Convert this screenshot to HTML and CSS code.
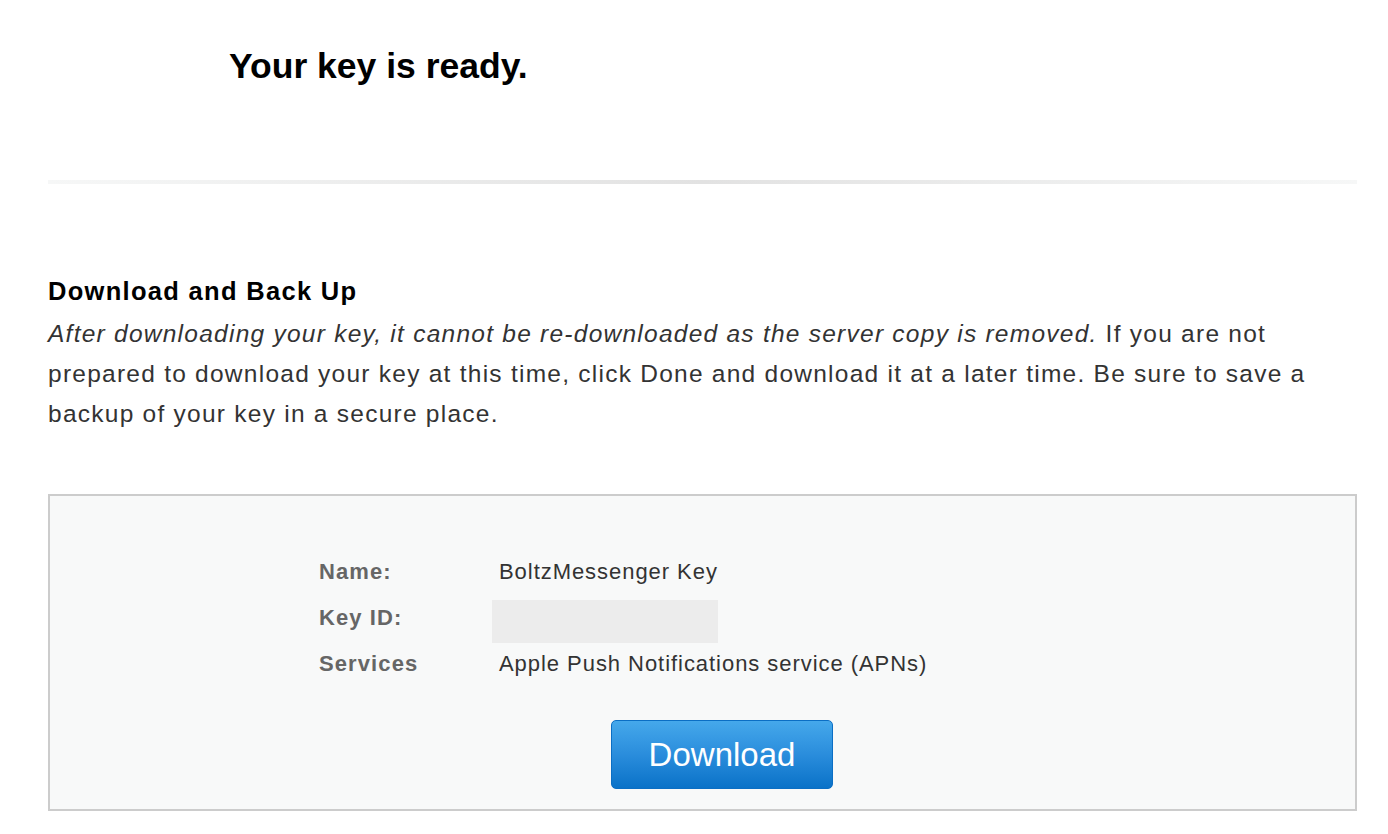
FILE: index.html
```html
<!DOCTYPE html>
<html>
<head>
<meta charset="utf-8">
<link rel="stylesheet" href="styles.css">
</head>
<body>
<div class="page">
  <h1 class="title">Your key is ready.</h1>
  <div class="rule"></div>
  <section class="backup">
    <h2 class="backup-heading">Download and Back Up</h2>
    <p class="backup-text"><em>After downloading your key, it cannot be re-downloaded as the server copy is removed.</em> If you are not prepared to download your key at this time, click Done and download it at a later time. Be sure to save a backup of your key in a secure place.</p>
  </section>
  <div class="keybox">
    <div class="keytable">
      <div class="label">Name:</div>
      <div class="value">BoltzMessenger Key</div>
      <div class="label">Key ID:</div>
      <div class="value value-redacted"><span class="redacted"></span></div>
      <div class="label">Services</div>
      <div class="value">Apple Push Notifications service (APNs)</div>
    </div>
    <div class="actions">
      <button class="btn-download">Download</button>
    </div>
  </div>
</div>
</body>
</html>
```
FILE: styles.css
```css
html, body {
  margin: 0;
  padding: 0;
  background: #fff;
}
body {
  font-family: "Liberation Sans", Arial, sans-serif;
  color: #333;
}
.page {
  padding: 0 31px 0 48px;
}
.title {
  margin: 0;
  padding: 46px 0 0 181px;
  font-size: 35.5px;
  line-height: 40px;
  font-weight: bold;
  color: #000;
}
.rule {
  margin-top: 94px;
  height: 4px;
  background: linear-gradient(to right, #f6f7f7 0%, #e2e2e2 50%, #f6f7f7 100%);
}
.backup {
  padding-top: 92px;
}
.backup-heading {
  margin: 0;
  font-size: 25.5px;
  line-height: 30px;
  letter-spacing: 1.3px;
  font-weight: bold;
  color: #000;
}
.backup-text {
  margin: 8px 0 0;
  font-size: 24.5px;
  line-height: 40px;
  letter-spacing: 1.25px;
  color: #333;
}
.backup-text em {
  font-style: italic;
}
.keybox {
  margin-top: 60px;
  border: 2px solid #cccccc;
  background: #f8f9f9;
  padding: 53px 0 20px 269px;
}
.keytable {
  display: grid;
  grid-template-columns: 173px auto;
  grid-auto-rows: 46px;
  align-items: center;
  font-size: 22px;
}
.label {
  font-weight: bold;
  color: #666;
  letter-spacing: 1.1px;
}
.value {
  color: #333;
  padding-left: 7px;
  letter-spacing: 0.95px;
}
.value-redacted {
  align-self: start;
  padding-top: 5px;
}
.redacted {
  display: block;
  width: 226px;
  height: 43px;
  margin-left: -7px;
  background: #ececec;
}
.actions {
  margin-top: 33px;
  padding-left: 292px;
}
.btn-download {
  display: block;
  width: 222px;
  height: 69px;
  border: 1px solid #0b6ec4;
  border-radius: 5px;
  background: linear-gradient(to bottom, #45a8eb 0%, #2a8ddc 50%, #0a72c8 100%);
  color: #fff;
  font-family: "Liberation Sans", Arial, sans-serif;
  font-size: 33px;
  font-weight: normal;
  padding: 0;
  cursor: pointer;
}
```
